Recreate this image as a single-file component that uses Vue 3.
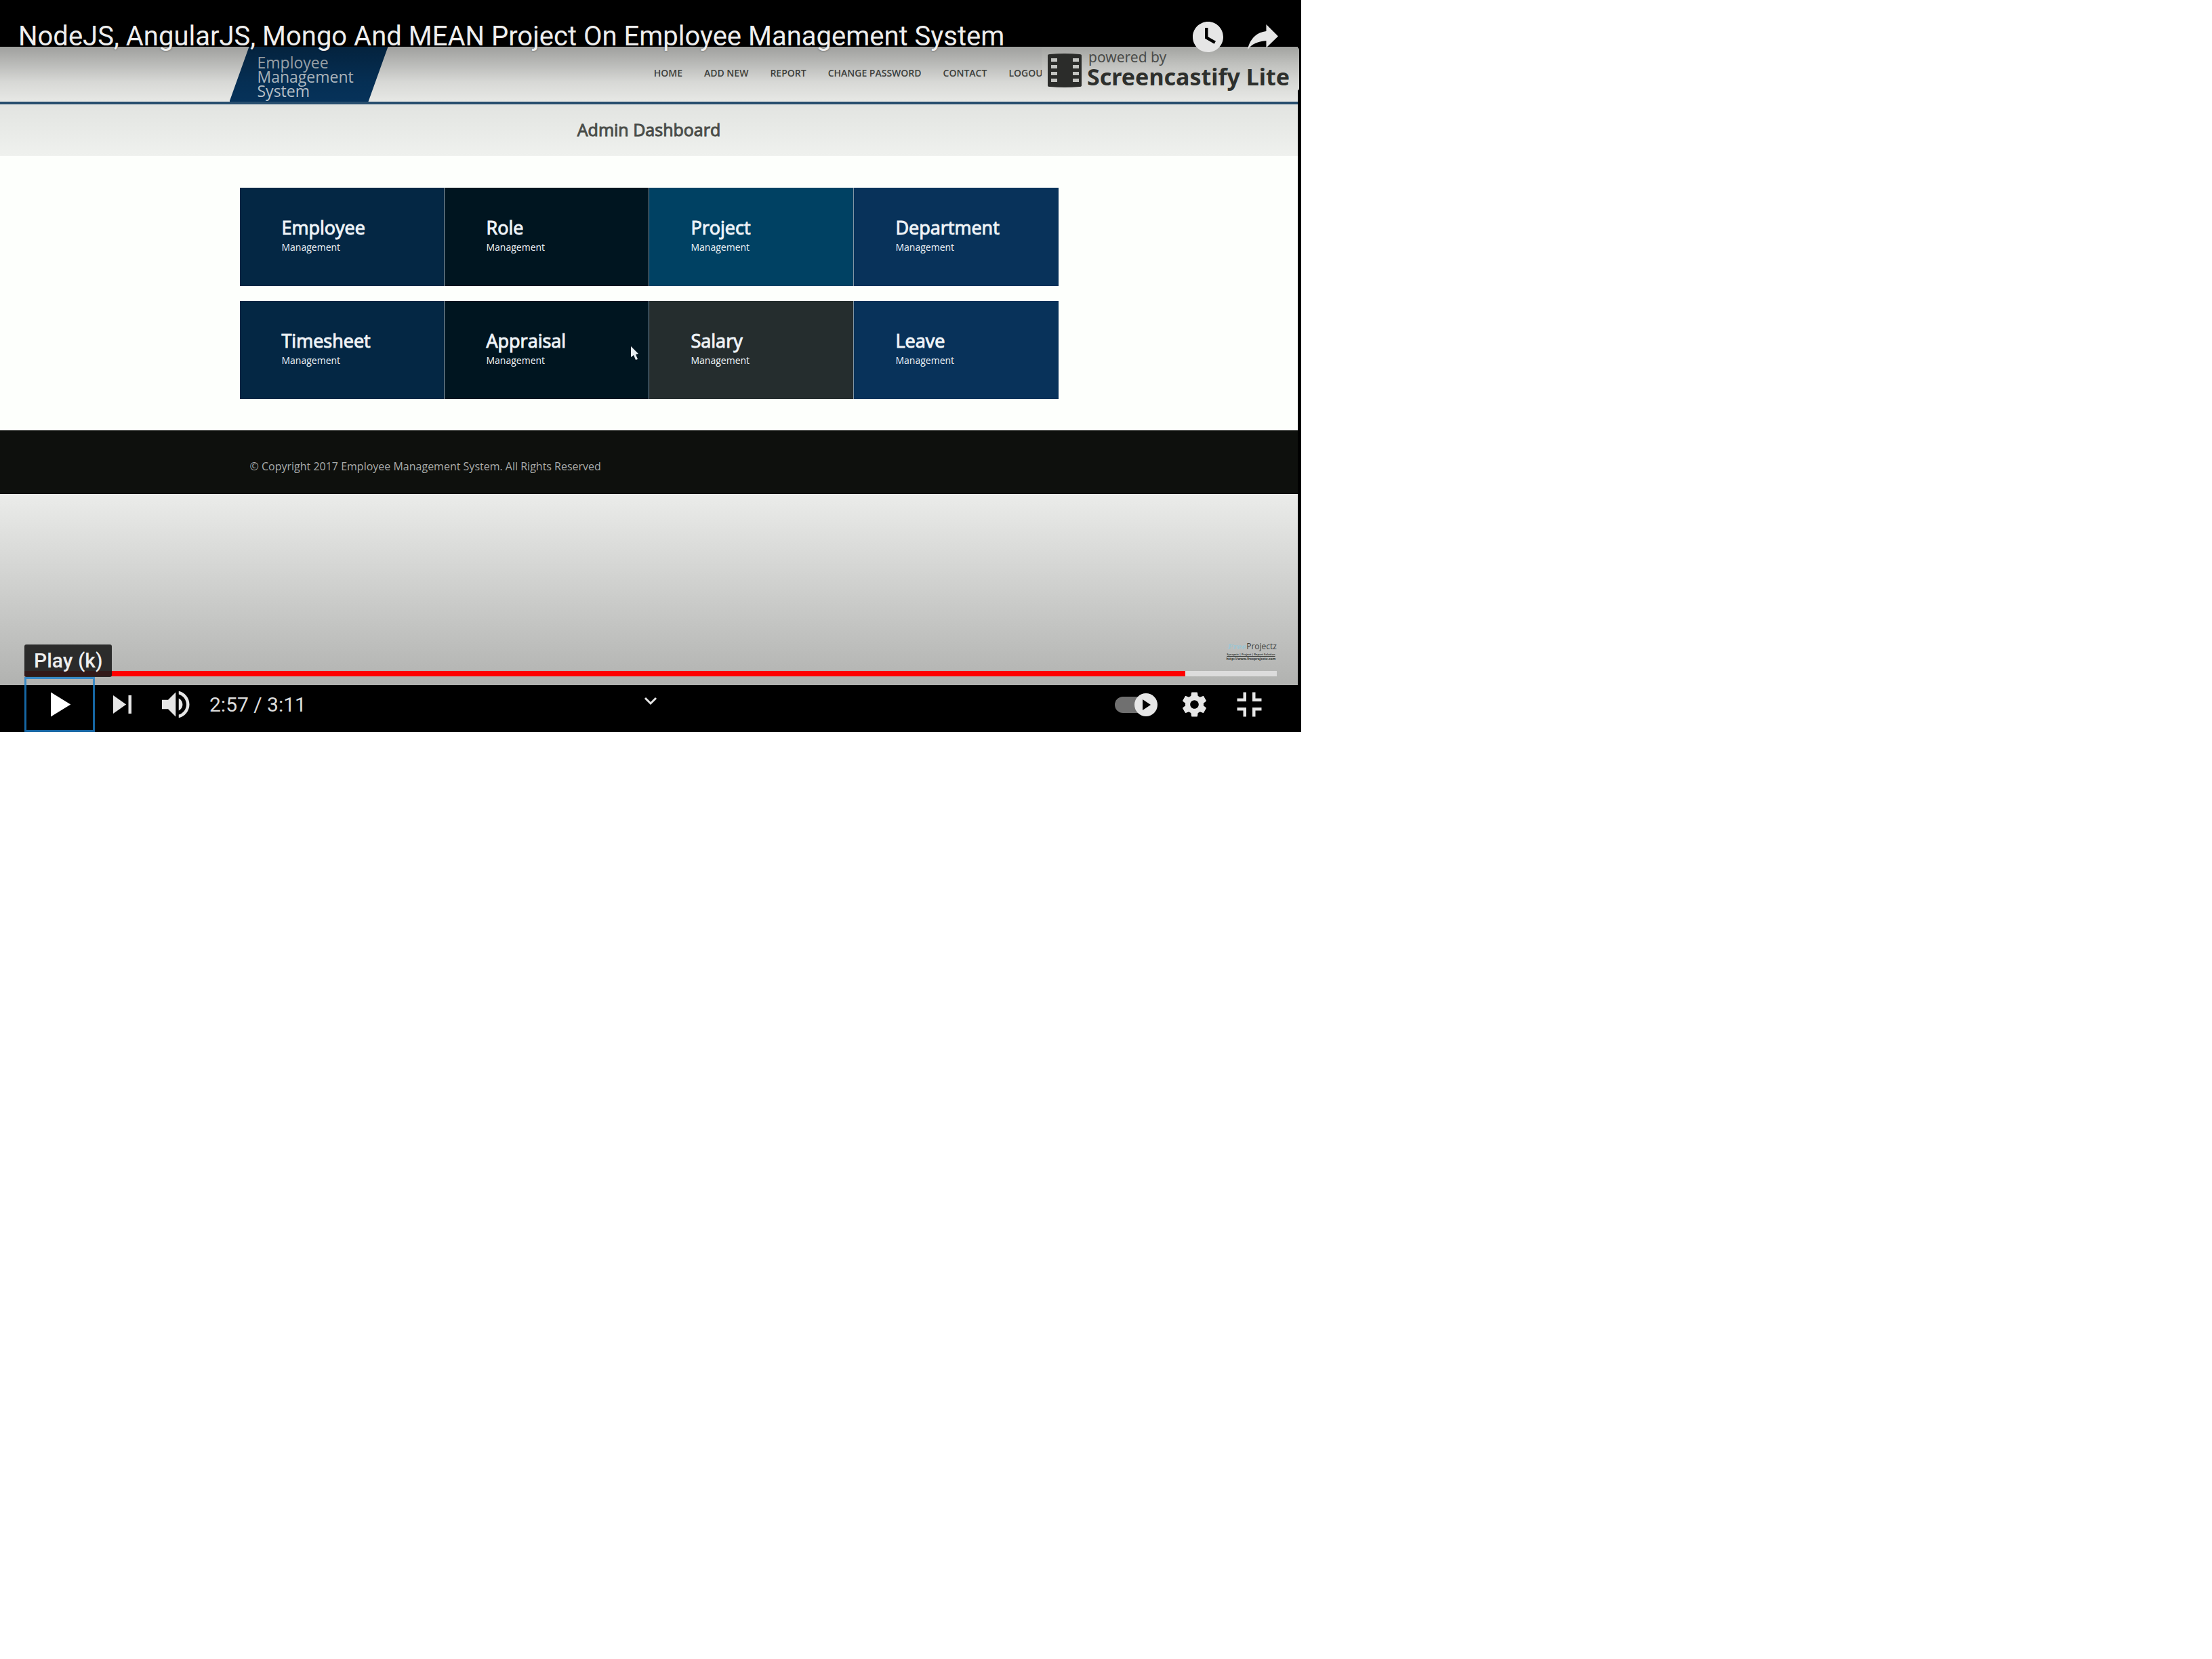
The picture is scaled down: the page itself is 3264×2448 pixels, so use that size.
<script setup>
import { ref } from 'vue'

const title = 'NodeJS, AngularJS, Mongo And MEAN Project On Employee Management System'
const nav = ['HOME', 'ADD NEW', 'REPORT', 'CHANGE PASSWORD', 'CONTACT', 'LOGOUT']
const tiles = [
  { name: 'Employee', tone: 'navy' },
  { name: 'Role', tone: 'ink' },
  { name: 'Project', tone: 'teal' },
  { name: 'Department', tone: 'royal' },
  { name: 'Timesheet', tone: 'navy' },
  { name: 'Appraisal', tone: 'ink' },
  { name: 'Salary', tone: 'slate' },
  { name: 'Leave', tone: 'royal' },
]
const duration = 191
const current = ref(177)
const clock = (s) => `${Math.floor(s / 60)}:${String(s % 60).padStart(2, '0')}`
</script>

<template>
  <main class="player">
    <section class="video">
      <div class="frame">
        <header class="site-header">
          <div class="container header-row">
            <a class="logo" href="#">Employee<br />Management<br />System</a>
            <nav class="site-nav">
              <a v-for="item in nav" :key="item" href="#">{{ item }}</a>
            </nav>
          </div>
        </header>
        <div class="page-title"><h2>Admin Dashboard</h2></div>
        <div class="container tiles">
          <a v-for="tile in tiles" :key="tile.name" href="#" class="tile" :class="tile.tone">
            <strong>{{ tile.name }}</strong>
            <span>Management</span>
          </a>
        </div>
        <footer class="site-footer">
          <p class="container">© Copyright 2017 Employee Management System. All Rights Reserved</p>
        </footer>
        <div class="backdrop">
          <div class="channel">
            <p class="brand"><em>Free</em>Projectz</p>
            <p class="tagline">Synopsis | Project | Report Solution</p>
            <p class="site">http://www.freeprojectz.com</p>
          </div>
        </div>
      </div>

      <div class="watermark">
        <svg width="50" height="50" viewBox="0 0 50 50" aria-hidden="true">
          <path fill="#2b2c2a" d="M0 3Q0 1 3 1Q25-1 47 1Q50 1 50 3V47Q50 49 47 49Q25 51 3 49Q0 49 0 47Z" />
          <path fill="#c3c4c1" d="M5 7h9v5H5zM5 17h9v5H5zM5 27h9v5H5zM5 37h9v5H5zM37 7h9v5h-9zM37 17h9v5h-9zM37 27h9v5h-9zM37 37h9v5h-9z" />
        </svg>
        <p><span>powered by</span><b>Screencastify Lite</b></p>
      </div>

      <svg class="cursor" width="14" height="22" viewBox="0 0 14 22" aria-hidden="true">
        <path fill="#e8eef2" d="M1 0V16L5 13L8 20L11 19L8 12L12 11Z" />
      </svg>
    </section>

    <section class="chrome">
      <div class="top-bar">
        <h1><a href="#">{{ title }}</a></h1>
        <div class="group">
          <button class="control" type="button" aria-label="Watch later">
            <svg viewBox="0 0 36 36"><path fill-rule="evenodd" d="M18,8 C12.47,8 8,12.47 8,18 C8,23.52 12.47,28 18,28 C23.52,28 28,23.52 28,18 C28,12.47 23.52,8 18,8 Z M16,19.02 L16,12 L18,12 L18,17.86 L23.1,20.81 L22.1,22.54 Z" /></svg>
          </button>
          <button class="control" type="button" aria-label="Share">
            <svg viewBox="0 0 36 36"><path d="m20.2,14.19 0,-4.45 7.79,7.79 -7.79,7.56 0,-4.56 C16.27,20.69 12.1,21.81 9.34,24.76 8.8,25.13 7.6,27.29 8.12,25.65 9.08,21.32 11.8,17.18 15.98,15.38 c1.33,-0.6 2.76,-0.98 4.21,-1.19 z" /></svg>
          </button>
        </div>
      </div>

      <div class="bottom-bar">
        <div class="tooltip" role="tooltip">Play (k)</div>
        <input v-model.number="current" class="progress" type="range" min="0" :max="duration" aria-label="Seek"
               :style="{ '--played': (current / duration) * 100 + '%' }" />
        <div class="controls">
          <div class="group">
            <button class="control play" type="button" aria-label="Play (k)">
              <svg viewBox="0 0 36 36"><path d="M12,26 25,18 12,10z" /></svg>
            </button>
            <button class="control" type="button" aria-label="Next">
              <svg viewBox="0 0 36 36"><path d="M12,24 20.5,18 12,12V24zM22,12v12h2V12h-2z" /></svg>
            </button>
            <button class="control" type="button" aria-label="Mute">
              <svg viewBox="0 0 36 36"><path d="M8,21 L12,21 L17,26 L17,10 L12,15 L8,15 Z M19,14 L19,22 C20.48,21.32 21.5,19.77 21.5,18 C21.5,16.26 20.48,14.74 19,14 Z M19,11.29 C21.89,12.15 24,14.83 24,18 C24,21.17 21.89,23.85 19,24.71 L19,26.77 C23.01,25.86 26,22.28 26,18 C26,13.72 23.01,10.14 19,9.23 Z" /></svg>
            </button>
            <span class="time">{{ clock(current) }} / {{ clock(duration) }}</span>
          </div>
          <button class="more" type="button" aria-label="Show more">
            <svg width="20" height="14" viewBox="0 0 20 14"><path d="M2 3L10 11L18 3" fill="none" stroke="#e6e6e6" stroke-width="3" /></svg>
          </button>
          <div class="group end">
            <button class="control" type="button" aria-label="Autoplay">
              <svg viewBox="0 0 81 81">
                <rect x="4" y="29" width="56" height="24" rx="12" fill="#707070" />
                <circle cx="50" cy="41" r="17" />
                <path d="M45 33L57 41L45 49Z" fill="#000" />
              </svg>
            </button>
            <button class="control" type="button" aria-label="Settings">
              <svg viewBox="0 0 36 36"><path fill-rule="evenodd" d="m23.94,18.78c.03,-.25 .05,-.51 .05,-.78 0,-.27 -.02,-.52 -.05,-.78l1.68,-1.32c.15,-.12 .19,-.33 .09,-.51l-1.6,-2.76c-.09,-.17 -.31,-.24 -.48,-.17l-1.99,.8c-.41,-.32 -.86,-.58 -1.35,-.78l-.3,-2.12c-.02,-.19 -.19,-.33 -.39,-.33l-3.2,0c-.2,0 -.36,.14 -.39,.33l-.3,2.12c-.48,.2 -.93,.47 -1.35,.78l-1.99,-.8c-.18,-.07 -.39,0 -.48,.17l-1.6,2.76c-.1,.17 -.05,.39 .09,.51l1.68,1.32c-.03,.25 -.05,.52 -.05,.78 0,.26 .02,.52 .05,.78l-1.68,1.32c-.15,.12 -.19,.33 -.09,.51l1.6,2.76c.09,.17 .31,.24 .48,.17l1.99,-.8c.41,.32 .86,.58 1.35,.78l.3,2.12c.02,.19 .19,.33 .39,.33l3.2,0c.2,0 .36,-.14 .39,-.33l.3,-2.12c.48,-.2 .93,-.47 1.35,-.78l1.99,.8c.18,.07 .39,0 .48,-.17l1.6,-2.76c.09,-.17 .05,-.39 -.09,-.51l-1.68,-1.32zm-5.94,2.01c-1.54,0 -2.8,-1.25 -2.8,-2.8 0,-1.54 1.25,-2.8 2.8,-2.8 1.54,0 2.8,1.25 2.8,2.8 0,1.54 -1.25,2.8 -2.8,2.8z" /></svg>
            </button>
            <button class="control" type="button" aria-label="Exit full screen">
              <svg viewBox="0 0 36 36"><path d="m14,14-4,0 0,2 6,0 0,-6-2,0zM22,14l0,-4-2,0 0,6 6,0 0,-2zM20,26l2,0 0,-4 4,0 0,-2-6,0zM10,22l4,0 0,4 2,0 0,-6-6,0z" /></svg>
            </button>
          </div>
        </div>
      </div>
    </section>
  </main>
</template>

<style>
body {
  background: #fff;
}
</style>

<style scoped>
* {
  box-sizing: border-box;
}
h1, h2, p {
  margin: 0;
  font-weight: 400;
}
a {
  color: inherit;
  text-decoration: none;
}
button {
  border: 0;
  padding: 0;
  background: none;
}
.player {
  display: grid;
  max-width: 1920px;
  background: #000;
  font-family: Roboto, Arial, sans-serif;
}
.video,
.chrome {
  grid-area: 1 / 1;
}

/* recorded page */
.video {
  position: relative;
  padding: 69px 5px 69px 0;
  font-family: "Open Sans", "Noto Sans", sans-serif;
}
.frame {
  position: relative;
  background: #fdfffc;
}
.frame::before {
  content: "";
  position: absolute;
  inset: 0 0 auto;
  height: 162px;
  z-index: 1;
  background: linear-gradient(rgba(0, 0, 0, 0.35), rgba(0, 0, 0, 0.24) 26px, rgba(0, 0, 0, 0.12) 52px, rgba(0, 0, 0, 0.06) 80px, transparent);
  pointer-events: none;
}
.container {
  width: 100%;
  max-width: 1208px;
  margin: 0 auto;
}
.site-header {
  background: #f5f6f3;
  border-bottom: 4px solid #2a5375;
}
.header-row {
  display: flex;
  justify-content: space-between;
  padding-right: 15px;
}
.logo {
  width: 234px;
  height: 81px;
  margin-left: -15px;
  padding: 13px 0 0 41px;
  background: #06355f;
  clip-path: polygon(29px 0, 100% 0, 205px 100%, 0 100%);
  color: #c6d2db;
  font-size: 23px;
  line-height: 21px;
}
.site-nav {
  display: flex;
  gap: 32px;
  padding-top: 28px;
  color: #4b4d4a;
  font-size: 14px;
  line-height: 22px;
  font-weight: 600;
}
.page-title {
  padding: 19px 0 21px;
  background: #eff1ee;
  text-align: center;
}
.page-title h2 {
  color: #4c4f4b;
  font-size: 25px;
  line-height: 36px;
  -webkit-text-stroke: 1px currentColor;
}
.tiles {
  display: grid;
  grid-template-columns: repeat(4, 1fr);
  gap: 22px 0;
  padding: 47px 0 46px;
}
.tile {
  display: flex;
  flex-direction: column;
  height: 145px;
  padding: 41px 0 0 62px;
  color: #eef3f7;
  border-right: 1px solid #8296a5;
}
.tile strong {
  font-size: 27px;
  line-height: 36px;
  font-weight: 400;
  -webkit-text-stroke: 1px currentColor;
}
.tile span {
  font-size: 14px;
  line-height: 22px;
}
.tile.royal { border-right: 0; }
.navy { background: #042744; }
.ink { background: #001520; }
.teal { background: #004163; }
.slate { background: #252d2e; }
.royal { background: #08325a; }
.site-footer {
  padding: 42px 0 30px;
  background: #0e100d;
}
.site-footer p {
  padding: 0 15px;
  color: #aaacaa;
  font-size: 16px;
  line-height: 22px;
}
.backdrop {
  display: flex;
  justify-content: flex-end;
  height: 282px;
  padding: 218px 31px 0 0;
  background: linear-gradient(#ebecea, #b1b2b0);
}
.channel {
  width: 76px;
  color: #3b3d3b;
  font-size: 5px;
  line-height: 7px;
  font-weight: 700;
  text-align: center;
  white-space: nowrap;
}
.channel .brand {
  font-size: 12px;
  line-height: 14px;
  text-align: right;
}
.channel .brand em {
  color: #9fc5d1;
  font-family: "DejaVu Serif", serif;
  font-size: 11px;
  font-weight: 700;
}
.channel .tagline {
  font-weight: 700;
  font-size: 4px;
  text-decoration: underline;
}
.channel .site {
  font-weight: 700;
}
.watermark {
  position: absolute;
  z-index: 2;
  top: 70px;
  right: 3px;
  display: flex;
  gap: 8px;
  width: 380px;
  height: 64px;
  padding: 9px 0 0 9px;
  border-radius: 4px;
  background: linear-gradient(#a3a4a1, #bfc0bd 24px, #d3d4d1 46px, #dedfdc);
  color: #2e302d;
  font-family: "Noto Sans", sans-serif;
  white-space: nowrap;
}
.watermark span,
.watermark b {
  display: block;
}
.watermark span {
  margin-top: -7px;
  padding-left: 2px;
  color: #4a4c49;
  font-size: 21px;
  line-height: 24px;
}
.watermark b {
  font-size: 34px;
  line-height: 34px;
}
.cursor {
  position: absolute;
  left: 930px;
  top: 511px;
}

/* player chrome */
.chrome {
  position: relative;
  z-index: 3;
  display: flex;
  flex-direction: column;
  justify-content: space-between;
}
.top-bar {
  display: flex;
  justify-content: space-between;
  padding: 14px 16px 0 27px;
}
.top-bar h1 {
  padding-top: 16px;
  color: #eee;
  font-size: 40px;
  line-height: 48px;
  white-space: nowrap;
  text-shadow: 0 0 3px rgba(0, 0, 0, 0.5);
}
.group {
  display: flex;
}
.control {
  width: 81px;
  height: 81px;
}
.control svg {
  display: block;
  width: 81px;
  height: 81px;
  margin: 0 auto;
  fill: #e6e6e6;
}
.bottom-bar {
  display: flex;
  flex-direction: column;
  position: relative;
  padding: 0 36px;
}
.progress {
  appearance: none;
  display: block;
  width: 100%;
  height: 8px;
  margin: 0 0 1px;
  background: linear-gradient(90deg, #f00 var(--played), #dcdcdc var(--played));
}
.progress::-webkit-slider-thumb {
  appearance: none;
  width: 0;
  height: 0;
}
.tooltip {
  position: absolute;
  left: 36px;
  bottom: 81px;
  height: 48px;
  padding: 0 14px;
  border-radius: 3px;
  background: rgba(28, 28, 28, 0.9);
  color: #eee;
  font-size: 30px;
  line-height: 48px;
  font-weight: 500;
}
.controls {
  display: grid;
  grid-template-columns: 1fr auto 1fr;
}
.play {
  width: 104px;
  border: 3px solid rgba(27, 127, 204, 0.8);
}
.play svg {
  margin: -3px auto;
  fill: #fff;
}
.time {
  padding-left: 7px;
  color: #ddd;
  font-size: 30px;
  line-height: 81px;
}
.more {
  height: 70px;
}
.more svg {
  display: block;
}
.end {
  justify-content: flex-end;
}
</style>
